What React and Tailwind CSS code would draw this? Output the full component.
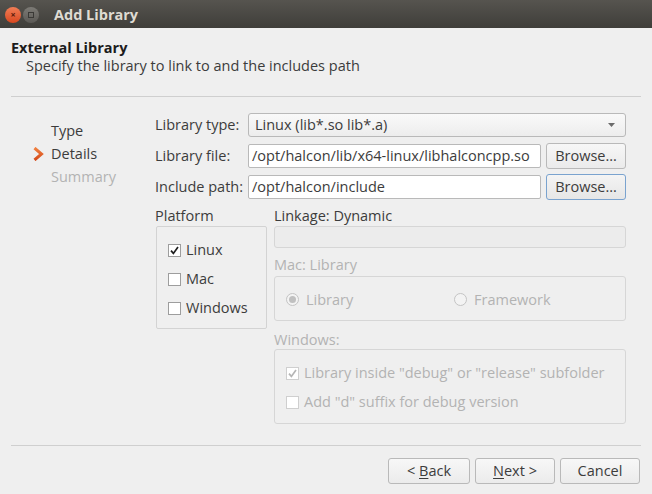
import React from 'react';

const font = { fontFamily: '"Open Sans", "Noto Sans", sans-serif' };

const Check = ({ checked, disabled }) => (
  <span
    className={`flex h-[13px] w-[13px] items-center justify-center border bg-white ${
      disabled ? 'border-[#cfcfcf] bg-[#f3f3f3]' : 'border-[#9d9d9d]'
    }`}
  >
    {checked && (
      <svg width="9" height="9" viewBox="0 0 9 9">
        <path
          d="M1 4.6 L3.4 7.4 L8 1"
          fill="none"
          stroke={disabled ? '#b5b5b5' : '#1e1e1e'}
          strokeWidth="1.7"
        />
      </svg>
    )}
  </span>
);

const Radio = ({ checked }) => (
  <span className="flex h-[13px] w-[13px] items-center justify-center rounded-full border border-[#c4c4c4] bg-[#f3f3f3]">
    {checked && <span className="h-[7px] w-[7px] rounded-full bg-[#c0c0c0]" />}
  </span>
);

const Button = ({ children, focused, className = '' }) => (
  <button
    className={`flex h-[26px] items-center justify-center rounded-[3px] border text-[14.5px] text-[#3c3c3c] ${
      focused
        ? 'border-[#7aa3cf] bg-gradient-to-b from-[#f4f4f4] to-[#e6e6e6]'
        : 'border-[#b9b9b9] bg-gradient-to-b from-[#f7f7f7] to-[#ebebeb]'
    } ${className}`}
  >
    {children}
  </button>
);

export default function App() {
  return (
    <div className="flex h-[494px] w-[652px] flex-col bg-[#efefef] text-[14.5px] text-[#3c3c3c]" style={font}>
      {/* Title bar */}
      <div className="flex h-[28px] items-center bg-gradient-to-b from-[#56544f] to-[#3f3e3a] pl-[5px] pt-px">
        <span className="flex h-[16px] w-[16px] items-center justify-center rounded-full bg-gradient-to-b from-[#f07d55] to-[#d9461c] text-[9px] font-bold leading-none text-[#5a1c0c]">
          ×
        </span>
        <span className="ml-[2px] flex h-[16px] w-[16px] items-center justify-center rounded-full bg-gradient-to-b from-[#7d7b76] to-[#5b5955]">
          <span className="h-[6px] w-[6px] border border-[#3a3936]" />
        </span>
        <span className="ml-[15px] text-[14.5px] font-bold text-[#dfdbd2]">Add Library</span>
      </div>

      {/* Header */}
      <div className="px-[11px] pt-[11px]">
        <div className="font-bold leading-[18px] text-[#1c1c1c]">External Library</div>
        <div className="pl-[15px] leading-[18px]">Specify the library to link to and the includes path</div>
      </div>
      <div className="mx-[11px] mt-[21px] h-px bg-[#cfcfcf]" />

      {/* Main */}
      <div className="flex flex-1 pl-[33px] pt-[16px]">
        {/* Nav */}
        <div className="w-[122px] pt-[6px] leading-[23px]">
          <div className="pl-[18px]">Type</div>
          <div className="flex items-center">
            <svg width="18" height="14" viewBox="0 0 18 14">
              <defs>
                <linearGradient id="chev" x1="0" y1="0" x2="0" y2="1">
                  <stop offset="0" stopColor="#f0803f" />
                  <stop offset="1" stopColor="#d44a1a" />
                </linearGradient>
              </defs>
              <path d="M1.5 1 L8.5 7 L1.5 13" fill="none" stroke="url(#chev)" strokeWidth="3" strokeLinejoin="miter" />
            </svg>
            <span>Details</span>
          </div>
          <div className="pl-[18px] text-[#b3b3b3]">Summary</div>
        </div>

        {/* Form */}
        <div className="flex w-[471px] flex-col">
          <div className="flex h-[24px] items-center">
            <span className="w-[93px]">Library type:</span>
            <div className="flex h-[24px] flex-1 items-center justify-between rounded-[3px] border border-[#b9b9b9] bg-gradient-to-b from-[#f9f9f9] to-[#ededed] pl-[6px] pr-[10px]">
              <span>Linux (lib*.so lib*.a)</span>
              <svg width="7" height="4" viewBox="0 0 7 4">
                <path d="M0 0 L7 0 L3.5 4 Z" fill="#6b6b6b" />
              </svg>
            </div>
          </div>
          <div className="mt-[7px] flex h-[24px] items-center">
            <span className="w-[93px]">Library file:</span>
            <div className="flex h-[24px] w-[293px] items-center overflow-hidden whitespace-nowrap rounded-[2px] border border-[#b9b9b9] bg-white pl-[3px]">
              /opt/halcon/lib/x64-linux/libhalconcpp.so
            </div>
            <Button className="ml-[5px] w-[80px]">Browse...</Button>
          </div>
          <div className="mt-[7px] flex h-[24px] items-center">
            <span className="w-[93px]">Include path:</span>
            <div className="flex h-[24px] w-[293px] items-center rounded-[2px] border border-[#b9b9b9] bg-white pl-[3px]">
              /opt/halcon/include
            </div>
            <Button focused className="ml-[5px] w-[80px]">Browse...</Button>
          </div>

          {/* Lower section */}
          <div className="mt-[6px] flex">
            <div className="w-[112px]">
              <div className="h-[21px] leading-[21px]">Platform</div>
              <div className="ml-px flex h-[103px] w-[111px] flex-col gap-[11px] rounded-[2px] border border-[#d3d3d3] pl-[11px] pt-[14px]">
                <label className="flex h-[18px] items-center gap-[5px]">
                  <Check checked />
                  <span>Linux</span>
                </label>
                <label className="flex h-[18px] items-center gap-[5px]">
                  <Check />
                  <span>Mac</span>
                </label>
                <label className="flex h-[18px] items-center gap-[5px]">
                  <Check />
                  <span>Windows</span>
                </label>
              </div>
            </div>

            <div className="ml-[7px] flex flex-1 flex-col">
              <div className="h-[21px] leading-[21px]">Linkage: Dynamic</div>
              <div className="h-[22px] rounded-[3px] border border-[#d6d6d6] bg-[#ececec]" />
              <div className="h-[28px] pt-[6px] leading-[22px] text-[#b3b3b3]">Mac: Library</div>
              <div className="flex h-[45px] items-center rounded-[3px] border border-[#d6d6d6] pl-[11px] pt-[2px] text-[#b3b3b3]">
                <label className="flex w-[168px] items-center gap-[7px]">
                  <Radio checked />
                  <span>Library</span>
                </label>
                <label className="flex items-center gap-[7px]">
                  <Radio />
                  <span>Framework</span>
                </label>
              </div>
              <div className="h-[28px] pt-[8px] leading-[22px] text-[#b3b3b3]">Windows:</div>
              <div className="flex h-[75px] flex-col gap-[11px] rounded-[3px] border border-[#d6d6d6] pl-[11px] pt-[14px] text-[#b3b3b3]">
                <label className="flex h-[18px] items-center gap-[5px]">
                  <Check checked disabled />
                  <span>Library inside "debug" or "release" subfolder</span>
                </label>
                <label className="flex h-[18px] items-center gap-[5px]">
                  <Check disabled />
                  <span>Add "d" suffix for debug version</span>
                </label>
              </div>
            </div>
          </div>
        </div>
      </div>

      {/* Footer */}
      <div className="mx-[11px] h-px bg-[#cfcfcf]" />
      <div className="flex h-[48px] items-center justify-end gap-[5px] pr-[12px] pt-[2px]">
        <Button className="w-[82px]">
          &lt;&nbsp;<span className="underline underline-offset-2">B</span>ack
        </Button>
        <Button className="w-[80px]">
          <span className="underline underline-offset-2">N</span>ext&nbsp;&gt;
        </Button>
        <Button className="w-[80px]">Cancel</Button>
      </div>
    </div>
  );
}
